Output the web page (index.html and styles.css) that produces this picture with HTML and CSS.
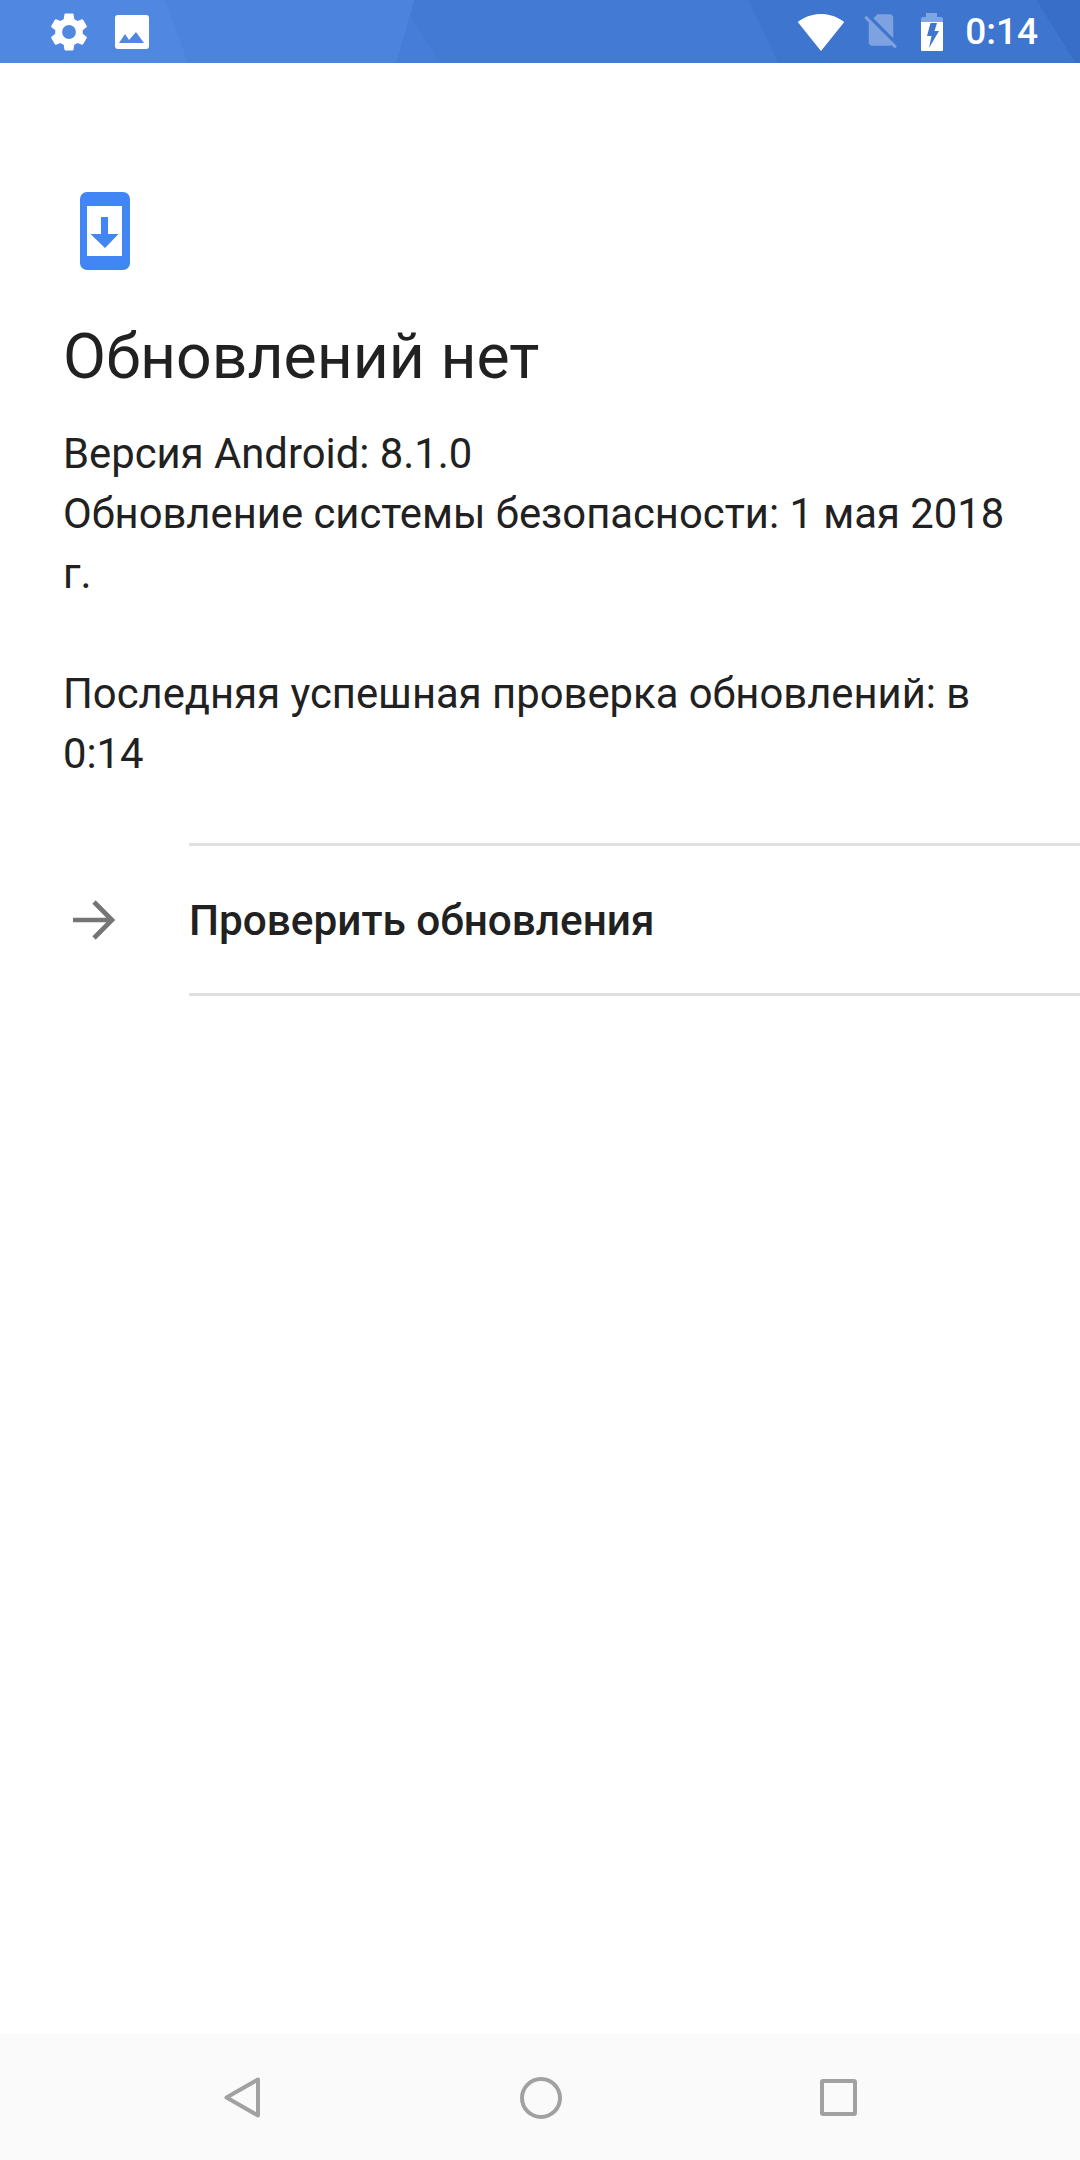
FILE: index.html
```html
<!DOCTYPE html>
<html lang="ru">
<head>
    <meta charset="UTF-8">
    <meta name="viewport" content="width=device-width, initial-scale=1.0">
    <title>Обновление системы</title>
    <link rel="stylesheet" href="styles.css">
</head>
<body>
    <header class="status-bar">
        <svg class="status-bg" width="1080" height="63" viewBox="0 0 1080 63">
            <rect width="1080" height="63" fill="#5087e1"/>
            <polygon points="165,0 414,0 396,63 188,63" fill="#4c83dd"/>
            <polygon points="396,63 410,15 439,63" fill="#467dd8"/>
            <polygon points="414,0 748,0 778,63 439,63 410,15" fill="#437ad4"/>
            <polygon points="748,0 1036,0 1075,63 778,63" fill="#3e75cf"/>
            <polygon points="1036,0 1080,0 1080,63 1075,63" fill="#386ec7"/>
        </svg>
        <div class="status-left">
            <svg width="46" height="46" viewBox="0 0 24 24"><path fill="#fff" d="M19.14 12.94c.04-.3.06-.61.06-.94s-.02-.64-.07-.94l2.03-1.58a.49.49 0 0 0 .12-.61l-1.92-3.32a.49.49 0 0 0-.59-.22l-2.39.96c-.5-.38-1.03-.7-1.62-.94l-.36-2.54a.48.48 0 0 0-.48-.41h-3.84a.47.47 0 0 0-.47.41l-.36 2.54c-.59.24-1.13.57-1.62.94l-2.39-.96a.48.48 0 0 0-.59.22L2.74 8.87a.47.47 0 0 0 .12.61l2.03 1.58c-.05.3-.09.63-.09.94s.02.64.07.94l-2.03 1.58a.49.49 0 0 0-.12.61l1.92 3.32c.12.22.37.29.59.22l2.39-.96c.5.38 1.03.7 1.62.94l.36 2.54c.05.24.24.41.48.41h3.84c.24 0 .44-.17.47-.41l.36-2.54c.59-.24 1.13-.56 1.62-.94l2.39.96c.22.08.47 0 .59-.22l1.92-3.32a.47.47 0 0 0-.12-.61l-2.01-1.58zM12 15.6A3.6 3.6 0 1 1 12 8.4a3.6 3.6 0 0 1 0 7.2z"/></svg>
            <svg width="34" height="34" viewBox="0 0 34 34"><path fill="#fff" fill-rule="evenodd" d="M3 0h28a3 3 0 0 1 3 3v28a3 3 0 0 1-3 3H3a3 3 0 0 1-3-3V3a3 3 0 0 1 3-3zM4 28h25l-8-11-7 8-4-6z"/></svg>
        </div>
        <div class="status-right">
            <svg class="icon-wifi" width="48" height="48" viewBox="0 0 24 24"><path fill="#fff" d="M12.01 21.49L23.64 7c-.45-.34-4.93-4-11.64-4C5.28 3 .81 6.66.36 7l11.63 14.49.01.01.01-.01z"/></svg>
            <svg class="icon-sim" width="42" height="42" viewBox="0 0 24 24"><path fill="#fff" fill-opacity=".33" d="M18.99 5c0-1.100-.89-2-1.990-2h-7L7.660 5.340 19 16.680 18.990 5zM3.650 3.880L2.380 5.150 5 7.770V19c0 1.100.9 2 2 2h10.010c.35 0 .67-.1.96-.26l1.880 1.880 1.270-1.270L3.650 3.880z"/></svg>
            <svg width="22" height="38" viewBox="0 0 22 38"><path fill="#fff" fill-opacity=".35" d="M5 0h11v4h4a2 2 0 0 1 2 2v3H0V6a2 2 0 0 1 2-2h3z"/><path fill="#fff" fill-rule="evenodd" d="M0 9h22v28a1 1 0 0 1-1 1H1a1 1 0 0 1-1-1zM9.500 10 6 23h4.500L8 35l10-17h-4.500L16 10z"/></svg>
            <span class="clock">0:14</span>
        </div>
    </header>

    <main class="main-content">
        <svg class="phone-icon" width="50" height="78" viewBox="0 0 50 78">
            <path fill="#4285f4" fill-rule="evenodd" d="M7 0h36a7 7 0 0 1 7 7v64a7 7 0 0 1-7 7H7a7 7 0 0 1-7-7V7a7 7 0 0 1 7-7zM7 14v50h35V14zM21 25h7v17h10.500L25 56 10.500 42H21z"/>
        </svg>
        <h1 class="update-title">Обновлений нет</h1>
        <p class="update-info">Версия Android: 8.1.0<br>Обновление системы безопасности: 1 мая 2018 г.</p>
        <p class="update-info last-check">Последняя успешная проверка обновлений: в 0:14</p>

        <div class="check-row">
            <div class="check-icon">
                <svg width="42" height="42" viewBox="0 0 42 42"><path fill="none" stroke="#757575" stroke-width="4.600" d="M0 21h38M21 3l18 18-18 18"/></svg>
            </div>
            <div class="check-label">Проверить обновления</div>
        </div>
    </main>

    <footer class="nav-bar">
        <svg width="36" height="41" viewBox="0 0 36 41"><path fill="none" stroke="#a1a1a1" stroke-width="4" stroke-linejoin="round" d="M34 2.500V38.500L2.500 20.500z"/></svg>
        <svg width="42" height="42" viewBox="0 0 42 42"><circle cx="21" cy="21" r="19" fill="none" stroke="#a1a1a1" stroke-width="4"/></svg>
        <svg width="37" height="37" viewBox="0 0 37 37"><rect x="2" y="2" width="33" height="33" rx="1" fill="none" stroke="#a1a1a1" stroke-width="4"/></svg>
    </footer>
</body>
</html>
```

FILE: styles.css
```css
html, body {
    margin: 0;
    padding: 0;
    height: 100%;
    font-family: Roboto, "Noto Sans", sans-serif;
    color: #212121;
    background: #fff;
}
body {
    display: flex;
    flex-direction: column;
    height: 2160px;
    overflow: hidden;
}
.status-bar {
    position: relative;
    height: 63px;
    flex-shrink: 0;
    display: flex;
    justify-content: space-between;
    align-items: center;
    padding: 0 42px 0 46px;
    box-sizing: border-box;
}
.status-bg {
    position: absolute;
    top: 0;
    left: 0;
}
.status-left, .status-right {
    position: relative;
    display: flex;
    align-items: center;
}
.status-left {
    gap: 23px;
}
.status-right {
    gap: 17px;
}
.icon-wifi {
    margin-right: -2px;
}
.icon-sim {
    margin-bottom: 3px;
    margin-right: 2px;
}
.clock {
    color: #fff;
    font-size: 37px;
    font-weight: 500;
    margin-left: 5px;
}
.main-content {
    flex: 1;
    padding: 129px 0 0 0;
}
.phone-icon {
    display: block;
    margin-left: 80px;
}
.update-title {
    margin: 47px 0 0 63px;
    font-size: 62.500px;
    font-weight: 400;
    line-height: 80px;
}
.update-info {
    margin: 27px 60px 0 63px;
    font-size: 41.800px;
    line-height: 60px;
}
.last-check {
    margin-top: 60px;
}
.check-row {
    display: flex;
    margin-top: 59px;
}
.check-icon {
    width: 189px;
    flex-shrink: 0;
    padding-left: 73px;
    box-sizing: border-box;
    display: flex;
    align-items: center;
}
.check-label {
    flex: 1;
    height: 145px;
    padding-top: 2px;
    display: flex;
    align-items: center;
    font-size: 42.300px;
    font-weight: 500;
    border-top: 3px solid #e0e0e0;
    border-bottom: 3px solid #e0e0e0;
}
.nav-bar {
    height: 126px;
    flex-shrink: 0;
    background: #fafafa;
    position: relative;
}
.nav-bar svg {
    position: absolute;
    top: 43px;
}
.nav-bar svg:nth-child(1) {
    left: 224px;
}
.nav-bar svg:nth-child(2) {
    left: 520px;
}
.nav-bar svg:nth-child(3) {
    left: 820px;
    top: 45px;
}
```
